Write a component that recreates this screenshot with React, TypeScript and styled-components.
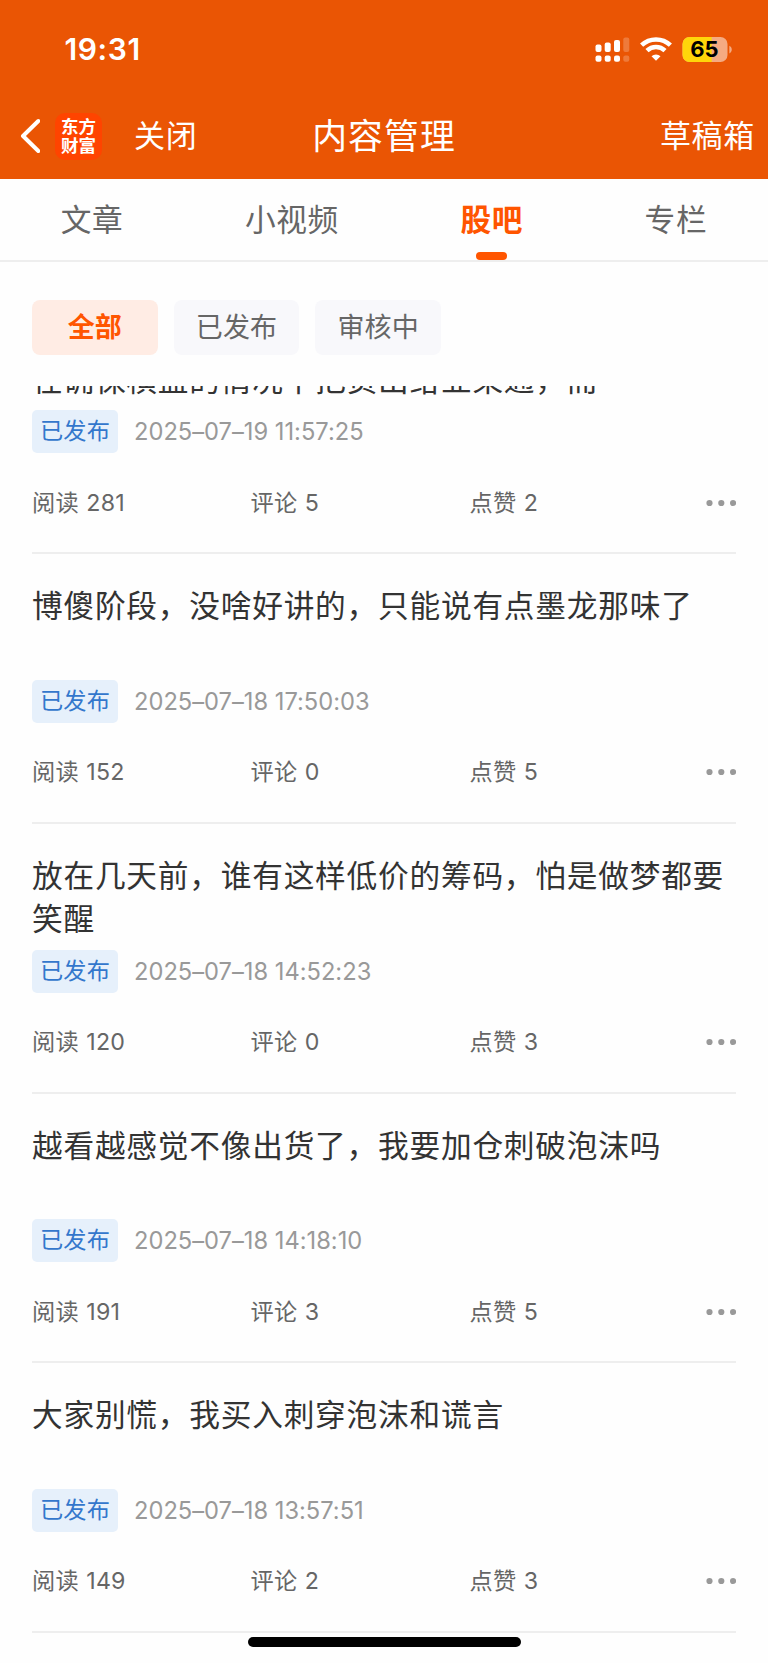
import React from "react";
import styled, { createGlobalStyle, css } from "styled-components";

const GlobalStyle = createGlobalStyle`
  * { box-sizing: border-box; }
  body {
    margin: 0;
    background: #fff;
    font-family: Inter, "Noto Sans CJK SC", sans-serif;
    font-feature-settings: "calt" 0;
  }
`;

const Screen = styled.div`
  position: relative;
  display: flex;
  flex-direction: column;
  width: 768px;
  height: 1663px;
  overflow: hidden;
  background: #fefefe;
`;

const Header = styled.header`
  height: 179px;
  flex: none;
  background: #ea5504;
  color: #fff;
`;

const StatusBar = styled.div`
  display: flex;
  align-items: center;
  justify-content: space-between;
  height: 98px;
  padding: 0 34px 0 64.5px;
`;

const Clock = styled.span`
  font-size: 30px;
  font-weight: 600;
  letter-spacing: 0.6px;
`;

const NavBar = styled.div`
  display: grid;
  grid-template-columns: 1fr auto 1fr;
  align-items: center;
  height: 76px;
  padding: 0 14px;
`;

const NavLeft = styled.div`
  display: flex;
  align-items: center;
  margin-left: 6px;
`;

const NavText = styled.span`
  font-size: 31px;
  letter-spacing: 0.7px;
  line-height: 44px;
  white-space: nowrap;
`;

const CloseText = styled(NavText)`
  margin-left: 32px;
`;

const DraftText = styled(NavText)`
  justify-self: end;
  margin-right: -1px;
`;

const PageTitle = styled.h1`
  margin: 0;
  font-size: 34.8px;
  font-weight: 400;
  letter-spacing: 1.1px;
  line-height: 48px;
`;

const Logo = styled.div`
  display: flex;
  flex-direction: column;
  align-items: center;
  justify-content: center;
  width: 47px;
  height: 47px;
  margin-left: 15px;
  border-radius: 10px;
  background: #ff4400;
  font-size: 17.5px;
  font-weight: 700;
  line-height: 19.5px;
`;

const TabBar = styled.nav`
  display: flex;
  justify-content: space-around;
  flex: none;
  height: 83px;
  border-bottom: 2px solid #eee;
`;

const Tab = styled.div<{ $active?: boolean }>`
  display: flex;
  flex-direction: column;
  align-items: center;
  justify-content: space-between;
  padding-top: 19px;
  font-size: 30.7px;
  letter-spacing: 0.6px;
  line-height: 44px;
  color: #666;
  ${(p) => p.$active && css`color: #ff5500; font-weight: 700;`}
`;

const TabMark = styled.span`
  width: 31.5px;
  height: 8px;
  border-radius: 4px;
  background: #ff5500;
`;

const Filters = styled.div`
  display: flex;
  flex: none;
  gap: 16px;
  height: 124px;
  padding: 38px 32px 0;
`;

const Chip = styled.div<{ $active?: boolean }>`
  width: 125.7px;
  height: 54.5px;
  border-radius: 8px;
  text-align: center;
  font-size: 27px;
  letter-spacing: 0.2px;
  line-height: 55px;
  color: #666;
  background: #f8f8fb;
  ${(p) => p.$active && css`color: #ff5500; background: #ffece4; font-weight: 700;`}
`;

const ListViewport = styled.main`
  flex: 1;
  min-height: 0;
  overflow: hidden;
`;

const List = styled.div`
  margin-top: -101.4px;
  padding: 0 32px;
`;

const Post = styled.article`
  height: 269.65px;
  padding-top: 30.2px;
  border-bottom: 2px solid #eee;
`;

const PostTitle = styled.h2`
  height: 95.7px;
  margin: 0 -8px 0 0;
  font-size: 30.7px;
  font-weight: 400;
  letter-spacing: 0.77px;
  line-height: 43.2px;
  color: #333;
  white-space: pre-line;
`;

const Meta = styled.div`
  display: flex;
  align-items: center;
  height: 43px;
`;

const Badge = styled.span`
  width: 86px;
  height: 43px;
  border-radius: 5px;
  background: #e6f0fb;
  color: #3377cc;
  font-size: 23.2px;
  letter-spacing: 0.2px;
  line-height: 43px;
  text-align: center;
`;

const Time = styled.time`
  margin-left: 16px;
  font-size: 23.7px;
  color: #999;
  white-space: nowrap;
`;

const Stats = styled.div`
  display: grid;
  grid-template-columns: 218.5px 219px 1fr auto;
  align-items: center;
  height: 44px;
  margin-top: 27.3px;
  color: #666;
`;

const Stat = styled.span`
  padding-bottom: 4px;
  font-size: 23.2px;
  letter-spacing: 0.2px;
  word-spacing: 0.8px;
`;

const HomeIndicator = styled.div`
  position: absolute;
  left: 247.5px;
  top: 1637px;
  width: 273.5px;
  height: 10px;
  border-radius: 5px;
  background: #000;
`;

const StatusIcons = () => (
  <svg width="140" height="30" viewBox="0 0 140 30" fill="#fff">
    <rect x="1.5" y="10.5" width="6" height="7.5" rx="2" />
    <rect x="10.7" y="8.5" width="6" height="9.5" rx="2" />
    <rect x="20" y="6" width="6" height="12" rx="2" />
    <rect x="29.3" y="3.5" width="6" height="14.5" rx="2" opacity="0.22" />
    <rect x="1.5" y="21.5" width="6" height="6.3" rx="2" />
    <rect x="10.7" y="21.5" width="6" height="6.3" rx="2" />
    <rect x="20" y="21.5" width="6" height="6.3" rx="2" />
    <rect x="29.3" y="21.5" width="6" height="6.3" rx="2" opacity="0.22" />
    <g fill="none" stroke="#fff" strokeWidth="4.5">
      <path d="M47.6 11.2 A20.8 20.8 0 0 1 76.4 11.2" />
      <path d="M53 16.7 A13 13 0 0 1 71 16.7" />
    </g>
    <path d="M62 26.8 L57.5 22.2 A6.8 6.8 0 0 1 66.5 22.2 Z" />
    <rect x="88.5" y="3" width="45" height="25" rx="7" fill="#f5aa82" />
    <path d="M95.5 3 H117.7 V28 H95.5 A7 7 0 0 1 88.5 21 V10 A7 7 0 0 1 95.5 3 Z" fill="#ffd60a" />
    <path d="M135.3 11.8 C138.6 13.2 138.6 18 135.3 19.4 Z" fill="#f5aa82" />
    <text x="110.5" y="23.4" textAnchor="middle" fill="#000" fontFamily="Inter" fontSize="22" fontWeight="700">65</text>
  </svg>
);

const BackIcon = () => (
  <svg width="20" height="36" viewBox="0 0 20 36" fill="none">
    <path d="M18.3 3 L3 18 L18.3 33" stroke="#fff" strokeWidth="4" strokeLinecap="round" strokeLinejoin="round" />
  </svg>
);

const MoreIcon = () => (
  <svg width="30" height="8" viewBox="0 0 30 8" fill="#999">
    <circle cx="3.5" cy="4" r="3.1" />
    <circle cx="15.3" cy="4" r="3.1" />
    <circle cx="27.1" cy="4" r="3.1" />
  </svg>
);

const tabs = ["文章", "小视频", "股吧", "专栏"];
const filters = ["全部", "已发布", "审核中"];

const posts = [
  { title: "\n在确保横盘的情况下把货出给业果通，而", time: "2025–07–19 11:57:25", reads: 281, comments: 5, likes: 2 },
  { title: "博傻阶段，没啥好讲的，只能说有点墨龙那味了", time: "2025–07–18 17:50:03", reads: 152, comments: 0, likes: 5 },
  { title: "放在几天前，谁有这样低价的筹码，怕是做梦都要笑醒", time: "2025–07–18 14:52:23", reads: 120, comments: 0, likes: 3 },
  { title: "越看越感觉不像出货了，我要加仓刺破泡沫吗", time: "2025–07–18 14:18:10", reads: 191, comments: 3, likes: 5 },
  { title: "大家别慌，我买入刺穿泡沫和谎言", time: "2025–07–18 13:57:51", reads: 149, comments: 2, likes: 3 },
];

export default function App() {
  return (
    <Screen>
      <GlobalStyle />
      <Header>
        <StatusBar>
          <Clock>19:31</Clock>
          <StatusIcons />
        </StatusBar>
        <NavBar>
          <NavLeft>
            <BackIcon />
            <Logo>
              <span>东方</span>
              <span>财富</span>
            </Logo>
            <CloseText>关闭</CloseText>
          </NavLeft>
          <PageTitle>内容管理</PageTitle>
          <DraftText>草稿箱</DraftText>
        </NavBar>
      </Header>
      <TabBar>
        {tabs.map((name) => (
          <Tab key={name} $active={name === "股吧"}>
            {name}
            {name === "股吧" && <TabMark />}
          </Tab>
        ))}
      </TabBar>
      <Filters>
        {filters.map((name) => (
          <Chip key={name} $active={name === "全部"}>{name}</Chip>
        ))}
      </Filters>
      <ListViewport>
        <List>
          {posts.map((post) => (
            <Post key={post.time}>
              <PostTitle>{post.title}</PostTitle>
              <Meta>
                <Badge>已发布</Badge>
                <Time>{post.time}</Time>
              </Meta>
              <Stats>
                <Stat>阅读 {post.reads}</Stat>
                <Stat>评论 {post.comments}</Stat>
                <Stat>点赞 {post.likes}</Stat>
                <MoreIcon />
              </Stats>
            </Post>
          ))}
        </List>
      </ListViewport>
      <HomeIndicator />
    </Screen>
  );
}
